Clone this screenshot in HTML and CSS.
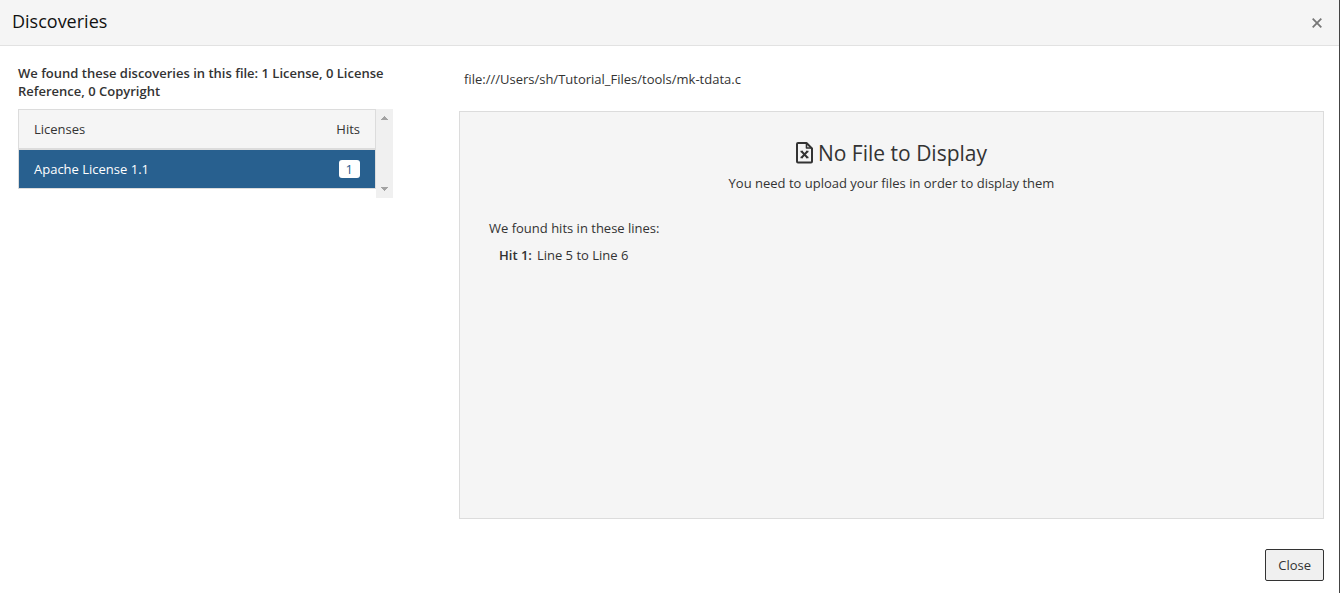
FILE: index.html
```html
<!DOCTYPE html>
<html lang="en">
<head>
<meta charset="utf-8">
<title>Discoveries</title>
<link rel="stylesheet" href="styles.css">
</head>
<body>
<div class="dialog" role="dialog" aria-labelledby="dialog-title">
  <header class="dialog-header">
    <h1 class="dialog-title" id="dialog-title">Discoveries</h1>
    <button class="dismiss" type="button" aria-label="Dismiss">
      <svg width="10" height="10" viewBox="0 0 10 10"><path d="M.7 .7L9.300 9.300M9.300 .7L.7 9.300" stroke="#777" stroke-width="1.800" fill="none"/></svg>
    </button>
  </header>
  <main class="dialog-body">
    <section class="summary">
      <p class="summary-text">We found these discoveries in this file: 1 License, 0 License Reference, 0 Copyright</p>
      <div class="list">
        <table class="licenses">
          <thead>
            <tr><th scope="col">Licenses</th><th scope="col" class="hits">Hits</th></tr>
          </thead>
          <tbody>
            <tr class="selected"><td>Apache License 1.1</td><td class="hits"><span class="badge">1</span></td></tr>
          </tbody>
        </table>
        <div class="scrollbar" aria-hidden="true">
          <svg width="7" height="4" viewBox="0 0 7 4"><path d="M3 0h1v1h1v1h1v1h1v1H0V3h1V2h1V1h1z" fill="#a3a3a3"/></svg>
          <svg width="7" height="4" viewBox="0 0 7 4"><path d="M0 0h7v1H6v1H5v1H4v1H3V3H2V2H1V1H0z" fill="#a3a3a3"/></svg>
        </div>
      </div>
    </section>
    <section class="viewer">
      <p class="path">file:///Users/sh/Tutorial_Files/tools/mk-tdata.c</p>
      <div class="panel">
        <h2 class="empty-title">
          <svg class="file-icon" width="17" height="22" viewBox="0 0 17 22" fill="none" stroke="#333" stroke-width="2" stroke-linejoin="round">
            <path d="M10.500 1H2Q1 1 1 2V19.500Q1 20.500 2 20.500H15Q16 20.500 16 19.500V6.500Z"/>
            <path d="M10.500 1V6H16" stroke-width="1.600"/>
            <path d="M5.700 9.500L11.300 15.500M11.300 9.500L5.700 15.500" stroke-width="1.900"/>
            <path d="M4.500 9.500H7M10 9.500H12.500M4.500 15.500H7M10 15.500H12.500" stroke-width="1.300"/>
          </svg>
          <span>No File to Display</span>
        </h2>
        <p class="empty-text">You need to upload your files in order to display them</p>
        <p class="found">We found hits in these lines:</p>
        <ul class="hit-list">
          <li><strong>Hit 1:</strong><span>Line 5 to Line 6</span></li>
        </ul>
      </div>
    </section>
  </main>
  <footer class="dialog-footer">
    <button class="close" type="button">Close</button>
  </footer>
</div>
</body>
</html>
```
FILE: styles.css
```css
* { box-sizing: border-box; }
body {
  margin: 0;
  font: 13px/18px "Open Sans", "Noto Sans", sans-serif;
  color: #333;
  background: #fff;
}
h1, h2, p, ul { margin: 0; padding: 0; font-weight: 400; }
button { font: inherit; color: inherit; }
.dialog {
  min-height: 100vh;
  display: flex;
  flex-direction: column;
  border-right: 1px solid #444;
}
.dialog-header {
  display: flex;
  align-items: center;
  justify-content: space-between;
  padding: 9px 12px 12px;
  background: #f5f5f5;
  border-bottom: 1px solid #e2e2e2;
}
.dialog-title { font-size: 18px; line-height: 24px; color: #111; }
.dismiss {
  display: flex;
  padding: 5px;
  margin-top: 3px;
  border: 0;
  background: none;
}
.dialog-body {
  flex: 1;
  display: grid;
  grid-template-columns: 375fr 865fr;
  column-gap: 66px;
  padding: 18px 15px 0 18px;
}
.summary-text { font-weight: 600; margin-bottom: 9px; }
.list { display: flex; align-items: stretch; }
.licenses {
  flex: 1;
  border-collapse: separate;
  border-spacing: 0;
  border: 1px solid #dcdcdc;
}
.licenses th, .licenses td {
  height: 38px;
  padding: 0 15px;
  text-align: left;
  font-weight: 400;
}
.licenses th { height: 40px; background: #f5f5f5; border-bottom: 2px solid #dcdcdc; }
.licenses .hits { text-align: right; }
.licenses .selected td { background: #28608f; color: #fff; font-weight: 500; }
.badge {
  display: inline-block;
  padding: 0 7px;
  border-radius: 3px;
  background: #fff;
  color: #28608f;
  font-weight: 400;
}
.scrollbar {
  display: flex;
  flex-direction: column;
  justify-content: space-between;
  align-items: center;
  width: 17px;
  margin-bottom: -9px;
  padding: 7px 0;
  background: #f0f0f0;
}
.viewer { display: flex; flex-direction: column; }
.path { padding: 6px 5px 23px; }
.panel {
  flex: 1;
  padding: 27px 29px;
  background: #f5f5f5;
  border: 1px solid #dcdcdc;
}
.empty-title {
  display: flex;
  align-items: center;
  justify-content: center;
  gap: 5px;
  font-size: 21px;
  line-height: 28px;
}
.empty-text { margin-top: 7px; text-align: center; }
.found { margin-top: 27px; }
.hit-list { margin-top: 9px; padding-left: 10px; list-style: none; }
.hit-list li { display: flex; gap: 5px; }
.hit-list strong { font-weight: 600; }
.dialog-footer {
  display: flex;
  justify-content: flex-end;
  padding: 30px 15px 12px;
}
.close {
  padding: 6px 12px;
  line-height: 18px;
  border: 1px solid #333;
  border-radius: 2px;
  background: #f0f0f0;
}
```
